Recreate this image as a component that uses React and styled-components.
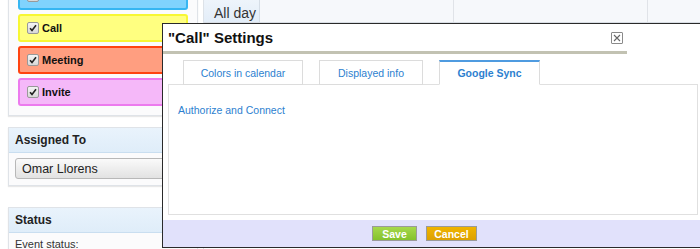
import React from 'react'
import styled, { createGlobalStyle } from 'styled-components'

const Global = createGlobalStyle`
  html, body {
    margin: 0;
    padding: 0;
    width: 700px;
    height: 249px;
    overflow: hidden;
    background: #fff;
    font-family: "Liberation Sans", Arial, sans-serif;
  }
`

const Page = styled.div`
  position: relative;
  display: flex;
  width: 700px;
  height: 249px;
  overflow: hidden;
`

const Sidebar = styled.div`
  width: 190px;
  padding-left: 8px;
  display: flex;
  flex-direction: column;
  flex-shrink: 0;
`

const Panel = styled.div`
  border: 1px solid #dfe3e8;
  box-shadow: 0 1px 1px #e8e8e8;
  background: #fbfbfc;
  margin-top: ${p => p.$top}px;
`

const CalList = styled.div`
  display: flex;
  flex-direction: column;
  gap: 4px;
  padding: 3px 9px 9px 9px;
`

const CalItem = styled.div`
  height: 24px;
  border: 2px solid ${p => p.$border};
  background: ${p => p.$fill};
  border-radius: 3px;
  display: flex;
  align-items: center;
  padding-left: 7px;
  gap: 3px;
  font-size: 11px;
  font-weight: bold;
  color: #111;
`

const Check = styled.span`
  width: 10px;
  height: 10px;
  border: 1px solid #999;
  border-radius: 2px;
  background: linear-gradient(#f4f4f4, #d8d8d8);
  display: flex;
  align-items: center;
  justify-content: center;
`

const PanelHead = styled.div`
  height: 24px;
  background: linear-gradient(#e9f3fc, #dfedf9);
  border-bottom: 1px solid #c9def0;
  display: flex;
  align-items: center;
  padding-left: 6px;
  font-size: 12px;
  font-weight: bold;
  color: #222;
`

const PanelBody = styled.div`
  padding: 5px 6px 6px 6px;
  font-size: 11px;
  color: #333;
`

const Select = styled.div`
  height: 19px;
  border: 1px solid #b8b8b8;
  border-radius: 3px;
  background: linear-gradient(#fafafa, #e2e2e2);
  display: flex;
  align-items: center;
  padding-left: 6px;
  font-size: 12.5px;
  color: #222;
  width: 200px;
`

const Calendar = styled.div`
  flex: 1;
  margin-left: 5px;
  border-left: 1px solid #dde2e8;
  display: flex;
  flex-direction: column;
`

const DayRow = styled.div`
  height: 22px;
  display: flex;
  background: #f6f8fb;
  border-bottom: 1px solid #d8dde4;
`

const AllDay = styled.div`
  width: 45px;
  padding-left: 10px;
  background: linear-gradient(#eef4fb, #e3edf8);
  border-right: 1px solid #d5dde6;
  font-size: 14px;
  color: #333;
  display: flex;
  align-items: flex-end;
  padding-bottom: 1px;
`

const DayCell = styled.div`
  width: 193px;
  border-right: 1px solid #e0e3e8;
`

const Modal = styled.div`
  position: absolute;
  left: 162px;
  top: 23px;
  width: 540px;
  height: 223px;
  border: 1px solid #2a2a2a;
  background: #fff;
  display: flex;
  flex-direction: column;
`

const Header = styled.div`
  width: 464px;
  height: 30px;
  border-bottom: 3px solid #c2c2b2;
  display: flex;
  align-items: center;
  justify-content: space-between;
  padding-left: 5px;
  box-sizing: border-box;
`

const Title = styled.div`
  font-size: 15px;
  font-weight: bold;
  color: #111;
`

const Close = styled.div`
  width: 10px;
  height: 10px;
  border: 1px solid #8a8a8a;
  border-radius: 1px;
  margin-right: 4px;
  display: flex;
  align-items: center;
  justify-content: center;
`

const Body = styled.div`
  padding: 6px 5px 0 5px;
  display: flex;
  flex-direction: column;
`

const Tabs = styled.div`
  display: flex;
  gap: 16px;
  padding-left: 15px;
  position: relative;
  z-index: 1;
  margin-bottom: -1px;
`

const Tab = styled.div`
  width: ${p => p.$w}px;
  height: ${p => (p.$active ? 22 : 23)}px;
  border: 1px solid #dcdcdc;
  border-top: ${p => (p.$active ? '2px solid #4f9be0' : '1px solid #dcdcdc')};
  border-bottom: ${p => (p.$active ? '1px solid #fff' : '1px solid #dcdcdc')};
  background: #fff;
  display: flex;
  align-items: center;
  justify-content: center;
  font-size: 10.5px;
  font-weight: ${p => (p.$active ? 'bold' : 'normal')};
  color: #2d7fcf;
`

const TabPanel = styled.div`
  height: 131px;
  border: 1px solid #e0e0e0;
  padding: 15px 9px;
  box-sizing: border-box;
`

const Link = styled.a`
  font-size: 10.5px;
  color: #2d7fcf;
  text-decoration: none;
`

const Footer = styled.div`
  margin-top: 5px;
  flex: 1;
  background: #e1e1fb;
  display: flex;
  align-items: center;
  gap: 9px;
  padding-left: 209px;
`

const Btn = styled.div`
  width: ${p => p.$w}px;
  height: 13px;
  border: 1px solid #9a9a9a;
  background: ${p => p.$bg};
  color: #fff;
  font-size: 10.5px;
  font-weight: bold;
  display: flex;
  align-items: center;
  justify-content: center;
`

const calendars = [
  { name: '', fill: '#80d3fd', border: '#36b6f2' },
  { name: 'Call', fill: '#ffff80', border: '#f7f734' },
  { name: 'Meeting', fill: '#ff9e80', border: '#ff4310' },
  { name: 'Invite', fill: '#f5b8f9', border: '#ec7aee' },
]

const Tick = () => (
  <svg width="8" height="8" viewBox="0 0 8 8">
    <path d="M1 4.2 L3 6.4 L7 1.2" fill="none" stroke="#222" strokeWidth="1.6" />
  </svg>
)

export default function App() {
  return (
    <Page>
      <Global />
      <Sidebar>
        <Panel $top={-22}>
          <CalList>
            {calendars.map(c => (
              <CalItem key={c.fill} $fill={c.fill} $border={c.border}>
                <Check>
                  <Tick />
                </Check>
                {c.name}
              </CalItem>
            ))}
          </CalList>
        </Panel>
        <Panel $top={11}>
          <PanelHead>Assigned To</PanelHead>
          <PanelBody>
            <Select>Omar Llorens</Select>
          </PanelBody>
        </Panel>
        <Panel $top={21}>
          <PanelHead>Status</PanelHead>
          <PanelBody>Event status:</PanelBody>
        </Panel>
      </Sidebar>
      <Calendar>
        <DayRow>
          <AllDay>All day</AllDay>
          <DayCell />
          <DayCell />
          <DayCell />
        </DayRow>
      </Calendar>

      <Modal>
        <Header>
          <Title>"Call" Settings</Title>
          <Close>
            <svg width="8" height="8" viewBox="0 0 8 8">
              <path d="M1 1 L7 7 M7 1 L1 7" stroke="#666" strokeWidth="1.1" />
            </svg>
          </Close>
        </Header>
        <Body>
          <Tabs>
            <Tab $w={118}>Colors in calendar</Tab>
            <Tab $w={102}>Displayed info</Tab>
            <Tab $w={99} $active>Google Sync</Tab>
          </Tabs>
          <TabPanel>
            <Link href="#">Authorize and Connect</Link>
          </TabPanel>
        </Body>
        <Footer>
          <Btn $w={43} $bg="linear-gradient(#a6d84c, #84c22c)">Save</Btn>
          <Btn $w={49} $bg="linear-gradient(#f0b400, #dca000)">Cancel</Btn>
        </Footer>
      </Modal>
    </Page>
  )
}
